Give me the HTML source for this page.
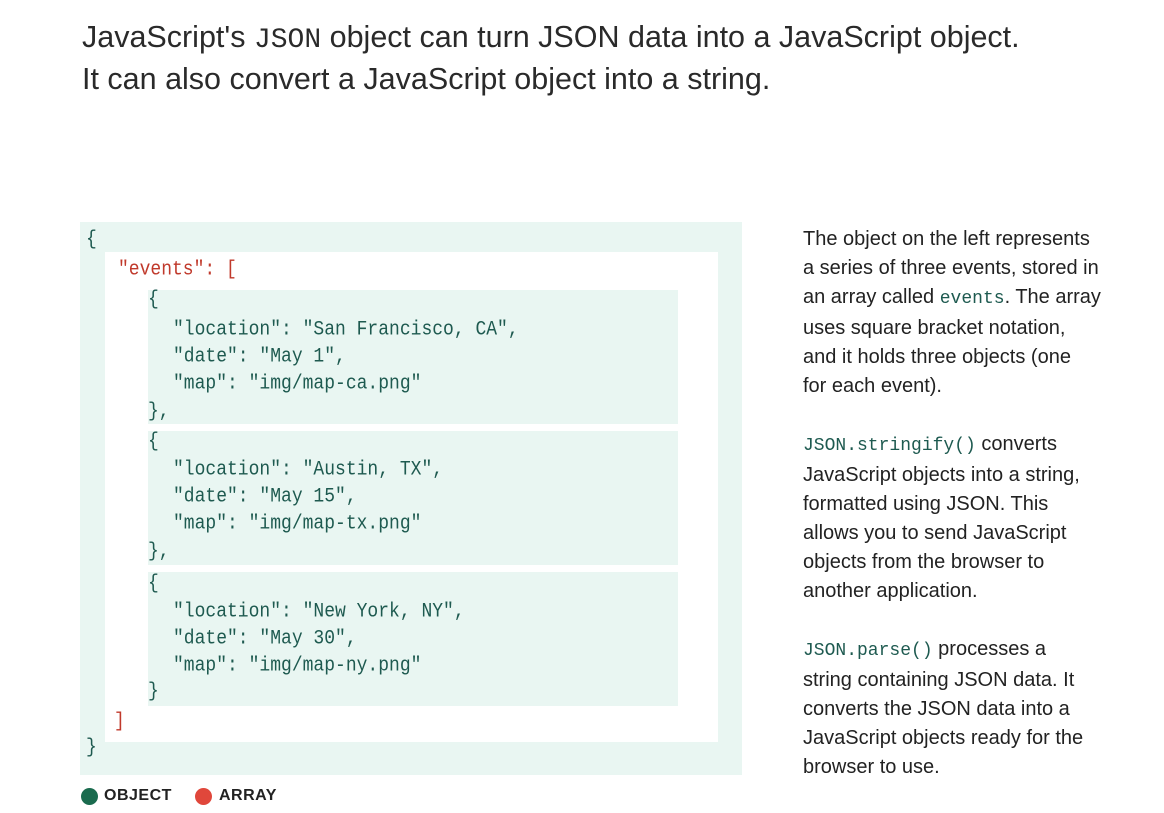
<!DOCTYPE html>
<html><head><meta charset="utf-8"><style>
body{margin:0;width:1164px;height:813px;background:#fff;position:relative;overflow:hidden;font-family:"Liberation Sans",sans-serif;color:#222}
.t{position:absolute;left:82px;top:18px;font-size:30.5px;line-height:38px;color:#2a2a2a}
.m{font-family:"Liberation Mono",monospace}
.box{position:absolute}
.l{position:absolute;font-family:"Liberation Mono",monospace;font-size:18px;line-height:24px;color:#1e5a50;white-space:pre;transform:scaleY(1.15);transform-origin:top left}
.r{color:#c0392b}
.side{position:absolute;left:803px;top:225px;font-size:20px;line-height:29px;color:#222}
.side p{margin:0 0 29px 0}
.side .m{font-size:18px;color:#1e5a50}
.leg{position:absolute;top:787px;font-size:16px;font-weight:bold;letter-spacing:.5px;color:#222}
.dot{position:absolute;top:788px;width:17px;height:17px;border-radius:50%}
</style></head><body>
<div class="t">JavaScript's <span class="m" style="font-size:28px">JSON</span> object can turn JSON data into a JavaScript object.<br>It can also convert a JavaScript object into a string.</div>
<div class="box" style="left:80px;top:222px;width:662px;height:553px;background:#e9f6f2"></div>
<div class="box" style="left:105px;top:252px;width:613px;height:490px;background:#fff"></div>
<div class="box" style="left:148px;top:290px;width:530px;height:134px;background:#e9f6f2"></div>
<div class="box" style="left:148px;top:431px;width:530px;height:134px;background:#e9f6f2"></div>
<div class="box" style="left:148px;top:572px;width:530px;height:134px;background:#e9f6f2"></div>
<div class="l" style="left:86px;top:226px">{</div>
<div class="l r" style="left:118px;top:256px">"events": [</div>
<div class="l" style="left:148px;top:286px">{</div>
<div class="l" style="left:173px;top:316px">"location": "San Francisco, CA",</div>
<div class="l" style="left:173px;top:343px">"date": "May 1",</div>
<div class="l" style="left:173px;top:370px">"map": "img/map-ca.png"</div>
<div class="l" style="left:148px;top:398px">},</div>
<div class="l" style="left:148px;top:428px">{</div>
<div class="l" style="left:173px;top:456px">"location": "Austin, TX",</div>
<div class="l" style="left:173px;top:483px">"date": "May 15",</div>
<div class="l" style="left:173px;top:510px">"map": "img/map-tx.png"</div>
<div class="l" style="left:148px;top:538px">},</div>
<div class="l" style="left:148px;top:570px">{</div>
<div class="l" style="left:173px;top:598px">"location": "New York, NY",</div>
<div class="l" style="left:173px;top:625px">"date": "May 30",</div>
<div class="l" style="left:173px;top:652px">"map": "img/map-ny.png"</div>
<div class="l" style="left:148px;top:678px">}</div>
<div class="l r" style="left:114px;top:708px">]</div>
<div class="l" style="left:86px;top:734px">}</div>
<div class="side">
<p>The object on the left represents<br>a series of three events, stored in<br>an array called <span class="m">events</span>. The array<br>uses square bracket notation,<br>and it holds three objects (one<br>for each event).</p>
<p><span class="m">JSON.stringify()</span> converts<br>JavaScript objects into a string,<br>formatted using JSON. This<br>allows you to send JavaScript<br>objects from the browser to<br>another application.</p>
<p><span class="m">JSON.parse()</span> processes a<br>string containing JSON data. It<br>converts the JSON data into a<br>JavaScript objects ready for the<br>browser to use.</p>
</div>
<div class="dot" style="left:81px;background:#1a6b4e"></div>
<div class="leg" style="left:104px">OBJECT</div>
<div class="dot" style="left:195px;background:#e0473b"></div>
<div class="leg" style="left:219px">ARRAY</div>
</body></html>
